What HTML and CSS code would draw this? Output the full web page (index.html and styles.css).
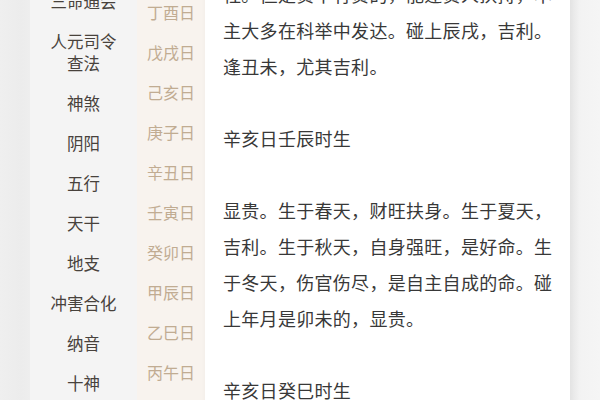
FILE: index.html
```html
<!DOCTYPE html>
<html lang="zh">
<head>
<meta charset="utf-8">
<title>辛亥日时辰</title>
<link rel="stylesheet" href="styles.css">
</head>
<body>
<div class="page">
  <div class="edge-left"></div>
  <ul class="nav">
    <li>三命通会</li>
    <li>人元司令<br>查法</li>
    <li>神煞</li>
    <li>阴阳</li>
    <li>五行</li>
    <li>天干</li>
    <li>地支</li>
    <li>冲害合化</li>
    <li>纳音</li>
    <li>十神</li>
  </ul>
  <ul class="dates">
    <li>丁酉日</li>
    <li>戊戌日</li>
    <li>己亥日</li>
    <li>庚子日</li>
    <li>辛丑日</li>
    <li>壬寅日</li>
    <li>癸卯日</li>
    <li>甲辰日</li>
    <li>乙巳日</li>
    <li>丙午日</li>
  </ul>
  <main class="content">
    <p>柱。但是贵中有贵的，能逢贵人扶持，本主大多在科举中发达。碰上辰戌，吉利。逢丑未，尤其吉利。</p>
    <p>辛亥日壬辰时生</p>
    <p>显贵。生于春天，财旺扶身。生于夏天，吉利。生于秋天，自身强旺，是好命。生于冬天，伤官伤尽，是自主自成的命。碰上年月是卯未的，显贵。</p>
    <p>辛亥日癸巳时生</p>
  </main>
  <div class="edge-right"></div>
</div>
</body>
</html>
```
FILE: styles.css
```css
html, body {
  margin: 0;
  padding: 0;
}
body {
  font-family: "Noto Sans CJK SC", "Noto Sans", sans-serif;
  background: #f2f2f2;
}
.page {
  display: flex;
  width: 600px;
  height: 400px;
  overflow: hidden;
}
.edge-left {
  width: 30px;
  flex: none;
  background: linear-gradient(90deg, #efefef 0%, #ececec 70%, #eeeeee 100%);
}
.nav {
  list-style: none;
  margin: -19px 0 0;
  padding: 0;
  width: 107px;
  flex: none;
  background: #f4f4f4;
  height: 440px;
}
.nav li {
  padding: 9px 0;
  line-height: 22px;
  font-size: 16.5px;
  text-align: center;
  color: #48423c;
}
.dates {
  list-style: none;
  margin: -8px 0 0;
  padding: 0;
  width: 68px;
  flex: none;
  background: #f8f3ee;
  height: 420px;
}
.dates li {
  height: 40px;
  line-height: 40px;
  font-size: 16px;
  text-align: center;
  color: #c1ac92;
}
.content {
  width: 365px;
  flex: none;
  box-sizing: border-box;
  background: #ffffff;
  padding: 0 17px 0 18px;
  margin-top: -24px;
  height: 440px;
  box-shadow: 3px 0 8px rgba(0, 0, 0, 0.06);
  position: relative;
  z-index: 1;
}
.content p {
  margin: 0 0 36px;
  font-size: 18px;
  letter-spacing: 0.3px;
  line-height: 36px;
  color: #383838;
}
.edge-right {
  flex: 1;
  background: linear-gradient(90deg, #eeeeee 0%, #f3f3f3 40%, #f5f5f5 100%);
}
```
